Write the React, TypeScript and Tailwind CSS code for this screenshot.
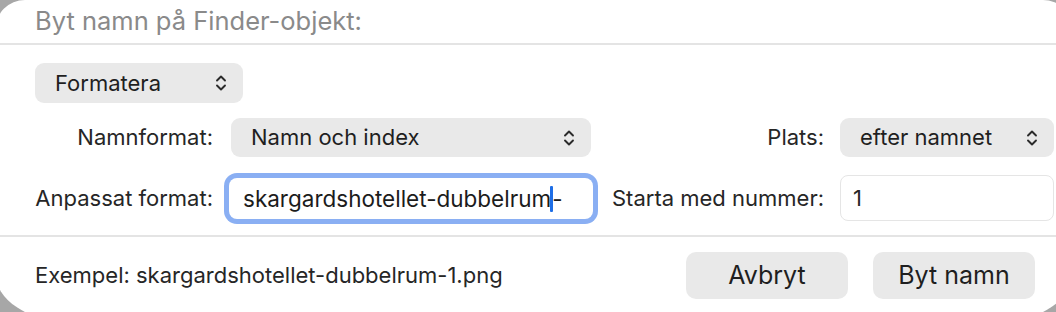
import React from "react";

function Chevrons() {
  return (
    <svg width="12" height="18" viewBox="0 0 12 18" fill="none" className="shrink-0">
      <path d="M2 6.5 L6 2.5 L10 6.5" stroke="#2b2b2b" strokeWidth="1.9" strokeLinecap="round" strokeLinejoin="round" />
      <path d="M2 11.5 L6 15.5 L10 11.5" stroke="#2b2b2b" strokeWidth="1.9" strokeLinecap="round" strokeLinejoin="round" />
    </svg>
  );
}

function Popup({ label, className }: { label: string; className?: string }) {
  return (
    <div
      className={
        "flex items-center justify-between rounded-[9px] bg-[#e9e9e9] pl-[20px] pr-[16px] text-[22px] text-[#1f1f1f] " +
        (className ?? "")
      }
    >
      <span>{label}</span>
      <Chevrons />
    </div>
  );
}

export default function App() {
  return (
    <div
      className="h-[312px] w-[1056px] overflow-hidden bg-[#a7a7a7]"
      style={{ fontFamily: "Inter, 'Noto Sans', 'Liberation Sans', sans-serif" }}
    >
      <div className="ml-[-5px] flex h-[322px] w-[1078px] flex-col rounded-tl-[30px] rounded-tr-[30px] rounded-bl-[75px_50px] rounded-br-[75px_50px] bg-white">
        {/* header */}
        <div className="flex h-[45px] shrink-0 items-center border-b-[2px] border-[#e4e4e4] pb-[2px] pl-[40px]">
          <span className="text-[25.5px] leading-[32px] text-[#8a8a8a]">Byt namn på Finder-objekt:</span>
        </div>

        {/* body */}
        <div className="flex flex-col pl-[40px] pr-[19px] pt-[18px]">
          <Popup label="Formatera" className="h-[40px] w-[208px]" />

          <div className="mt-[15px] grid grid-cols-[178px_364px_1fr_214px] items-center gap-x-[16px] gap-y-[18px] text-[22px] text-[#262626]">
            <div className="whitespace-nowrap text-right">Namnformat:</div>
            <Popup label="Namn och index" className="mx-[2px] h-[39px]" />
            <div className="whitespace-nowrap text-right">Plats:</div>
            <Popup label="efter namnet" className="h-[39px]" />

            <div className="whitespace-nowrap text-right">Anpassat format:</div>
            <div className="flex h-[41px] items-center rounded-[8px] bg-white pl-[14px] shadow-[0_0_0_5px_#8aaff3]">
              <span className="whitespace-nowrap text-[22.5px] text-[#1c1c1c]">
                skargardshotellet-dubbelrum
                <span className="relative mx-[-1px] inline-block h-[26px] w-[3px] translate-y-[5px] rounded-[1px] bg-[#1e6ee6]" />
                -
              </span>
            </div>
            <div className="whitespace-nowrap text-right">Starta med nummer:</div>
            <div className="flex h-[46px] items-center rounded-[8px] border border-[#e5e5e5] bg-white pl-[12px]">
              1
            </div>
          </div>
        </div>

        <div className="mt-[14px] border-b-[2px] border-[#e4e4e4]" />

        {/* footer */}
        <div className="flex items-center justify-between pl-[40px] pr-[38px] pt-[15px]">
          <span className="text-[22px] text-[#262626]">Exempel: skargardshotellet-dubbelrum-1.png</span>
          <div className="flex gap-[25px]">
            <div className="flex h-[47px] w-[162px] items-center justify-center rounded-[10px] bg-[#e9e9e9] text-[25px] text-[#1f1f1f]">
              Avbryt
            </div>
            <div className="flex h-[47px] w-[162px] items-center justify-center rounded-[10px] bg-[#e9e9e9] text-[25px] text-[#1f1f1f]">
              Byt namn
            </div>
          </div>
        </div>
      </div>
    </div>
  );
}
